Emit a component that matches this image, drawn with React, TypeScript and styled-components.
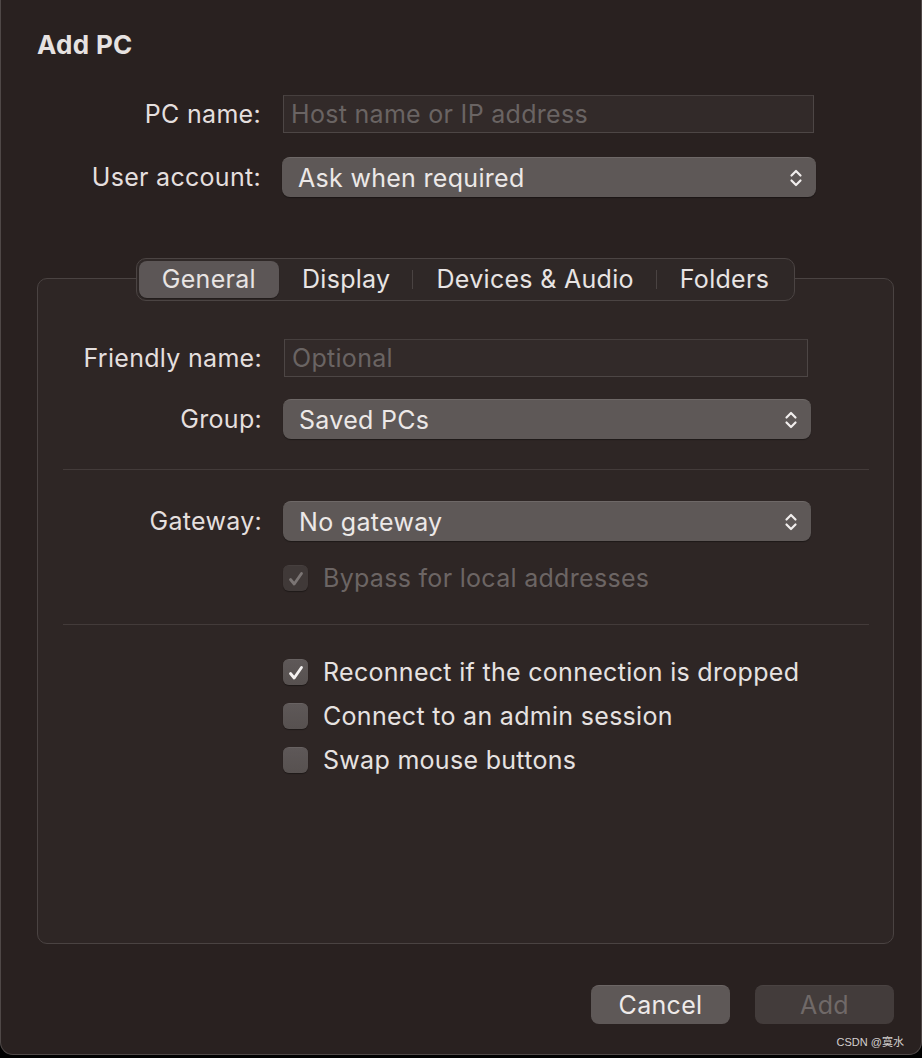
import React from 'react';
import styled, { createGlobalStyle } from 'styled-components';

const GlobalStyle = createGlobalStyle`
    html, body {
        margin: 0;
        padding: 0;
        background: #000;
    }

    body {
        font-family: Inter, "Noto Sans", "Noto Sans CJK SC", sans-serif;
        font-size: 25px;
        letter-spacing: 0.3px;
        color: #e4dfde;
        -webkit-font-smoothing: antialiased;
    }
`;

const Window = styled.div`
    position: relative;
    box-sizing: border-box;
    width: 922px;
    height: 1055px;
    padding: 0 27px 0 36px;

    display: flex;
    flex-direction: column;

    background: #292120;
    border: 1px solid #4f4847;
    border-top: none;
    border-radius: 0 0 13px 13px;
`;

const Title = styled.h1`
    margin: 29px 0 0 0;
    font-size: 26px;
    line-height: 32px;
    font-weight: 700;
    color: #e6e2e1;
`;

const TopForm = styled.div`
    display: flex;
    flex-direction: column;
    gap: 24px;
    margin-top: 34px;
`;

const Row = styled.div<{ $height?: number }>`
    display: flex;
    align-items: center;
    height: ${({ $height }) => $height ?? 40}px;
`;

const Label = styled.div`
    box-sizing: border-box;
    width: 224px;
    text-align: right;
    white-space: nowrap;
`;

const TextInput = styled.div<{ $width: number }>`
    box-sizing: border-box;
    width: ${({ $width }) => $width}px;
    height: 38px;
    margin-left: 22px;
    padding: 0 7px;

    display: flex;
    align-items: center;

    background: #322a29;
    border: 1px solid #4d4645;
    border-top-color: #463f3e;

    color: #6a6463;
`;

const Select = styled.div<{ $width: number }>`
    box-sizing: border-box;
    width: ${({ $width }) => $width}px;
    height: 40px;
    margin-left: 21px;
    padding: 0 13px 0 16px;

    display: flex;
    align-items: center;
    justify-content: space-between;

    background: #5e5857;
    border-top: 1px solid #6e6867;
    border-radius: 8px;
    box-shadow: 0 1px 1px rgba(0, 0, 0, 0.35);

    color: #ece8e7;
`;

const Chevrons = () => (
    <svg width="14" height="24" viewBox="0 0 14 24" fill="none">
        <path d="M2.5 9.5 L7 5 L11.5 9.5" stroke="#f1eeed" strokeWidth="2.2" strokeLinecap="round" strokeLinejoin="round" />
        <path d="M2.5 14.5 L7 19 L11.5 14.5" stroke="#f1eeed" strokeWidth="2.2" strokeLinecap="round" strokeLinejoin="round" />
    </svg>
);

const Box = styled.div`
    box-sizing: border-box;
    height: 666px;
    margin-top: 81px;
    display: flex;
    flex-direction: column;

    background: #2e2625;
    border: 1px solid #4a4342;
    border-radius: 10px;
`;

const TabBar = styled.div`
    align-self: center;
    box-sizing: border-box;
    height: 43px;
    margin-top: -21px;
    padding: 2px;

    display: flex;
    align-items: stretch;

    background: #2f2827;
    border: 1px solid #4b4443;
    border-radius: 10px;
`;

const Tab = styled.div<{ $active?: boolean; $divider?: boolean }>`
    position: relative;
    padding: 0 23px 1px;
    display: flex;
    align-items: center;

    color: #e8e4e3;
    border-radius: 8px;
    background: ${({ $active }) => ($active ? '#5c5656' : 'transparent')};
    box-shadow: ${({ $active }) => ($active ? '0 1px 1px rgba(0,0,0,0.3)' : 'none')};

    &::before {
        content: '';
        display: ${({ $divider }) => ($divider ? 'block' : 'none')};
        position: absolute;
        left: -1px;
        top: 9px;
        bottom: 9px;
        width: 1px;
        background: #4a4342;
    }
`;

const BoxBody = styled.div`
    display: flex;
    flex-direction: column;
    padding-top: 38px;
`;

const Divider = styled.div<{ $top: number; $bottom: number }>`
    height: 1px;
    margin: ${({ $top, $bottom }) => `${$top}px 24px ${$bottom}px 25px`};
    background: #433b3a;
`;

const CheckList = styled.div<{ $top?: number }>`
    display: flex;
    flex-direction: column;
    gap: 18px;
    margin-top: ${({ $top }) => $top ?? 0}px;
`;

const CheckRow = styled.div<{ $disabled?: boolean }>`
    display: flex;
    align-items: center;
    height: 26px;
    margin-left: 245px;
    gap: 15px;

    color: ${({ $disabled }) => ($disabled ? '#6c6564' : '#e6e2e1')};
`;

const CheckSquare = styled.div<{ $disabled?: boolean }>`
    box-sizing: border-box;
    width: 25px;
    height: 26px;
    display: flex;
    align-items: center;
    justify-content: center;

    border-radius: 6px;
    background: ${({ $disabled }) => ($disabled ? '#403938' : 'linear-gradient(#5e5858, #575150)')};
    border-top: 1px solid ${({ $disabled }) => ($disabled ? '#463f3e' : '#686262')};
    box-shadow: 0 1px 1px rgba(0, 0, 0, 0.35);
`;

const Check = ({ color }: { color: string }) => (
    <svg width="18" height="18" viewBox="0 0 18 18" fill="none">
        <path d="M3.5 9.5 L7.2 14 L14.5 3.5" stroke={color} strokeWidth="2.8" strokeLinecap="round" strokeLinejoin="round" />
    </svg>
);

const Checkbox = ({ label, checked, disabled }: { label: string; checked?: boolean; disabled?: boolean }) => (
    <CheckRow $disabled={disabled}>
        <CheckSquare $disabled={disabled}>{checked && <Check color={disabled ? '#7b7574' : '#f4f1f0'} />}</CheckSquare>
        {label}
    </CheckRow>
);

const Footer = styled.div`
    display: flex;
    justify-content: flex-end;
    gap: 25px;
    margin-top: 41px;
`;

const Button = styled.div<{ $disabled?: boolean }>`
    box-sizing: border-box;
    width: 139px;
    height: 39px;
    display: flex;
    align-items: center;
    justify-content: center;

    border-radius: 8px;
    background: ${({ $disabled }) => ($disabled ? '#433c3b' : '#5e5857')};
    color: ${({ $disabled }) => ($disabled ? '#706968' : '#eeeae9')};
    border-top: 1px solid ${({ $disabled }) => ($disabled ? '#4a4342' : '#6c6665')};
`;

const Watermark = styled.div`
    position: absolute;
    right: 17px;
    bottom: 5px;
    font-family: "Liberation Sans", "Noto Sans CJK SC", sans-serif;
    font-size: 11px;
    letter-spacing: 0;
    color: #d4d0cf;
`;

const tabs = ['General', 'Display', 'Devices & Audio', 'Folders'];

export default function App() {
    return (
        <>
            <GlobalStyle />
            <Window>
                <Title>Add PC</Title>

                <TopForm>
                    <Row $height={38}>
                        <Label>PC name:</Label>
                        <TextInput $width={531}>Host name or IP address</TextInput>
                    </Row>
                    <Row>
                        <Label>User account:</Label>
                        <Select $width={534}>
                            Ask when required
                            <Chevrons />
                        </Select>
                    </Row>
                </TopForm>

                <Box>
                    <TabBar>
                        {tabs.map((t, i) => (
                            <Tab key={t} $active={i === 0} $divider={i > 1}>
                                {t}
                            </Tab>
                        ))}
                    </TabBar>

                    <BoxBody>
                        <Row $height={38}>
                            <Label>Friendly name:</Label>
                            <TextInput $width={524}>Optional</TextInput>
                        </Row>
                        <Row style={{ marginTop: 22 }}>
                            <Label>Group:</Label>
                            <Select $width={528}>
                                Saved PCs
                                <Chevrons />
                            </Select>
                        </Row>

                        <Divider $top={30} $bottom={31} />

                        <Row>
                            <Label>Gateway:</Label>
                            <Select $width={528}>
                                No gateway
                                <Chevrons />
                            </Select>
                        </Row>
                        <CheckList $top={24}>
                            <Checkbox label="Bypass for local addresses" checked disabled />
                        </CheckList>

                        <Divider $top={33} $bottom={34} />

                        <CheckList>
                            <Checkbox label="Reconnect if the connection is dropped" checked />
                            <Checkbox label="Connect to an admin session" />
                            <Checkbox label="Swap mouse buttons" />
                        </CheckList>
                    </BoxBody>
                </Box>

                <Footer>
                    <Button>Cancel</Button>
                    <Button $disabled>Add</Button>
                </Footer>

                <Watermark>CSDN @寞水</Watermark>
            </Window>
        </>
    );
}
